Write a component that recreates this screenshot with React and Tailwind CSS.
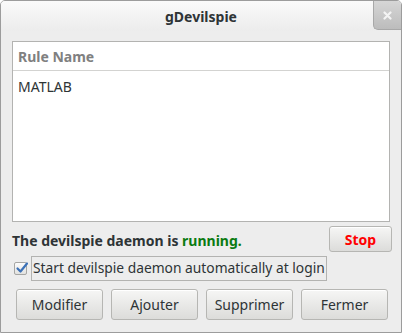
export default function App() {
  const btn =
    'h-[31px] rounded-[3px] border border-[#b6b6b3] bg-gradient-to-b from-[#f6f6f5] to-[#dcdcda] text-[14px] text-[#2e3436] shadow-[inset_0_1px_0_#fff] flex items-center justify-center'

  return (
    <div
      className="w-[402px] h-[333px] bg-[#ededed] flex flex-col overflow-hidden rounded-t-[5px] border border-[#9c9c9c]"
      style={{ fontFamily: '"Noto Sans", "DejaVu Sans", sans-serif' }}
    >
      {/* barre de titre */}
      <div className="relative h-[30px] shrink-0 bg-gradient-to-b from-[#fafafa] to-[#ececec] flex items-center justify-center">
        <span className="text-[14px] font-bold text-[#2e3436] pt-[1px]">gDevilspie</span>
        <div className="absolute right-0 top-0 w-[28px] h-[29px] rounded-bl-[5px] border-l border-b border-[#a8a8a8] bg-gradient-to-b from-[#d6d6d6] to-[#bcbcbc] flex items-center justify-center">
          <svg width="9" height="9" viewBox="0 0 9 9">
            <path d="M1.5 1.5 L7.5 7.5 M7.5 1.5 L1.5 7.5" stroke="#f4f4f4" strokeWidth="2.2" strokeLinecap="round" />
          </svg>
        </div>
      </div>

      <div className="flex flex-col px-[11px] pt-[10px]">
        {/* liste des règles */}
        <div className="h-[181px] bg-white border border-[#b3b3b1] flex flex-col">
          <div className="h-[29px] border-b border-[#d3d3d1] flex items-center px-[5px]">
            <span className="text-[14px] font-bold text-[#808080]">Rule Name</span>
          </div>
          <div className="px-[5px] pt-[5px] text-[14px] text-[#2e3436]">MATLAB</div>
        </div>

        {/* statut */}
        <div className="flex items-center justify-between mt-[5px] h-[26px]">
          <span className="text-[14px] font-bold text-[#2e3436] pt-[1px]">
            The devilspie daemon is <span className="text-[#0b7b12]">running.</span>
          </span>
          <button className="w-[63px] h-[26px] mr-[-2px] mt-[-2px] rounded-[3px] border border-[#b6b6b3] bg-gradient-to-b from-[#f6f6f5] to-[#dcdcda] shadow-[inset_0_1px_0_#fff] text-[14px] font-bold text-[#ff0000]">
            Stop
          </button>
        </div>

        {/* case à cocher */}
        <div className="flex items-center mt-[2px] h-[26px]">
          <div className="w-[13px] h-[13px] ml-[2px] rounded-[2px] border border-[#a6a6a4] bg-gradient-to-b from-[#fcfcfc] to-[#e2e2e0] relative">
            <svg className="absolute left-[0px] top-[-2px]" width="14" height="14" viewBox="0 0 14 14">
              <path d="M2.5 7.5 L5.5 10.5 L12 2.5" stroke="#3d72b8" strokeWidth="2.2" fill="none" strokeLinecap="round" strokeLinejoin="round" />
            </svg>
          </div>
          <div className="ml-[4px] h-[25px] px-[1px] border border-[#b3b3b1] flex items-center">
            <span className="text-[13.8px] text-[#2e3436]">Start devilspie daemon automatically at login</span>
          </div>
        </div>

        {/* boutons */}
        <div className="flex gap-[8px] mt-[8px] pl-[4px]">
          <button className={btn + ' w-[87px]'}>Modifier</button>
          <button className={btn + ' w-[87px]'}>Ajouter</button>
          <button className={btn + ' w-[87px]'}>Supprimer</button>
          <button className={btn + ' w-[87px]'}>Fermer</button>
        </div>
      </div>
    </div>
  )
}
